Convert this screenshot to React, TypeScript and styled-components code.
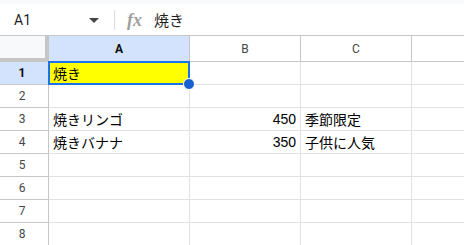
import styled, { createGlobalStyle } from "styled-components";

const GlobalStyle = createGlobalStyle`
  html, body {
    margin: 0;
    padding: 0;
    background: #ffffff;
    overflow: hidden;
  }
  body {
    font-family: Roboto, "Noto Sans CJK JP", "Liberation Sans", sans-serif;
    color: #1f1f1f;
  }
`;

const FONT = `Roboto, "Noto Sans CJK JP", "Liberation Sans", sans-serif`;
const CELL_FONT = `"Liberation Sans", Arial, "Noto Sans CJK JP", sans-serif`;

// column widths include the right grid line
const COLS = [49, 141, 111, 111, 60];

type Row = { a?: string; b?: string; c?: string };

const rows: Row[] = [
  { a: "焼き" },
  {},
  { a: "焼きリンゴ", b: "450", c: "季節限定" },
  { a: "焼きバナナ", b: "350", c: "子供に人気" },
  {},
  {},
  {},
  {},
];

const App = () => {
  return (
    <Page>
      <GlobalStyle />
      <TopStrip />
      <FormulaBar>
        <NameBox>
          <span>A1</span>
          <Caret />
        </NameBox>
        <Divider />
        <FxIcon>
          <svg width="24" height="18" viewBox="0 0 24 18" overflow="visible">
            <text
              x="1"
              y="15"
              fontFamily="'Liberation Serif', serif"
              fontStyle="italic"
              fontWeight="bold"
              fontSize="18"
              fill="#9e9e9e"
            >
              fx
            </text>
          </svg>
        </FxIcon>
        <FormulaText>焼き</FormulaText>
      </FormulaBar>

      <Grid>
        <HeaderRow>
          <Corner />
          {["A", "B", "C", ""].map((label, i) => (
            <ColHeader key={i} $w={COLS[i + 1]} $active={label === "A"} $last={i === 3}>
              {label}
            </ColHeader>
          ))}
        </HeaderRow>

        {rows.map((r, i) => (
          <DataRow key={i}>
            <RowHeader $active={i === 0}>{i + 1}</RowHeader>
            <Cell $w={COLS[1]} $fill={i === 0 ? "#ffff00" : undefined}>
              {r.a}
              {i === 0 && (
                <Selection>
                  <Handle />
                </Selection>
              )}
            </Cell>
            <Cell $w={COLS[2]} $align="right">
              {r.b}
            </Cell>
            <Cell $w={COLS[3]}>{r.c}</Cell>
            <Cell $w={COLS[4]} $last />
          </DataRow>
        ))}
      </Grid>
    </Page>
  );
};

export default App;

const Page = styled.div`
  width: 464px;
  height: 245px;
  overflow: hidden;
`;

const TopStrip = styled.div`
  height: 4px;
  background: #f8f9fa;
`;

const FormulaBar = styled.div`
  height: 31px;
  display: flex;
  align-items: center;
  border-bottom: 1px solid #c4c7c5;
  font-family: ${FONT};
  font-size: 14px;
`;

const NameBox = styled.div`
  box-sizing: border-box;
  width: 102px;
  padding-left: 14px;
  padding-right: 3px;
  margin-top: 1px;
  display: flex;
  align-items: center;
  justify-content: space-between;
`;

const Caret = styled.div`
  width: 0;
  height: 0;
  border-left: 5px solid transparent;
  border-right: 5px solid transparent;
  border-top: 5px solid #444746;
`;

const Divider = styled.div`
  width: 1px;
  height: 20px;
  background: #dadce0;
  margin-left: 12px;
`;

const FxIcon = styled.div`
  margin-left: 11px;
  display: flex;
  align-items: center;
`;

const FormulaText = styled.div`
  margin-left: 4px;
  font-size: 15px;
  margin-top: -1px;
`;

const Grid = styled.div`
  display: flex;
  flex-direction: column;
`;

const HeaderRow = styled.div`
  display: flex;
  height: 26px;
`;

const Corner = styled.div`
  width: 49px;
  height: 26px;
  box-sizing: border-box;
  background: #f8f9fa;
  border-right: 4px solid #c4c7c5;
  border-bottom: 4px solid #c4c7c5;
  flex-shrink: 0;
`;

const ColHeader = styled.div<{ $w: number; $active?: boolean; $last?: boolean }>`
  width: ${(p) => p.$w}px;
  flex-shrink: 0;
  flex-grow: ${(p) => (p.$last ? 1 : 0)};
  box-sizing: border-box;
  height: 26px;
  border-right: 1px solid #c4c7c5;
  border-bottom: 1px solid #c4c7c5;
  background: ${(p) => (p.$active ? "#d3e3fd" : "#ffffff")};
  display: flex;
  align-items: center;
  justify-content: center;
  font-family: ${FONT};
  font-size: 12px;
  font-weight: ${(p) => (p.$active ? 700 : 400)};
  color: ${(p) => (p.$active ? "#0b0b0b" : "#444746")};
`;

const DataRow = styled.div`
  display: flex;
  height: 23px;
`;

const RowHeader = styled.div<{ $active?: boolean }>`
  width: 49px;
  flex-shrink: 0;
  box-sizing: border-box;
  border-right: 1px solid #c4c7c5;
  border-bottom: 1px solid #c4c7c5;
  background: ${(p) => (p.$active ? "#d3e3fd" : "#ffffff")};
  display: flex;
  align-items: center;
  justify-content: center;
  padding-right: 4px;
  font-family: ${FONT};
  font-size: 12px;
  font-weight: ${(p) => (p.$active ? 700 : 400)};
  color: ${(p) => (p.$active ? "#0b0b0b" : "#444746")};
`;

const Cell = styled.div<{ $w: number; $align?: "left" | "right"; $fill?: string; $last?: boolean }>`
  position: relative;
  width: ${(p) => p.$w}px;
  flex-shrink: 0;
  flex-grow: ${(p) => (p.$last ? 1 : 0)};
  box-sizing: border-box;
  border-right: 1px solid #e1e1e1;
  border-bottom: 1px solid #e1e1e1;
  background: ${(p) => p.$fill ?? "#ffffff"};
  display: flex;
  align-items: center;
  justify-content: ${(p) => (p.$align === "right" ? "flex-end" : "flex-start")};
  padding: 0 4px;
  font-family: ${CELL_FONT};
  font-size: 14px;
  color: #000000;
  white-space: nowrap;
`;

const Selection = styled.div`
  position: absolute;
  z-index: 2;
  left: -1px;
  top: -1px;
  right: -1px;
  bottom: -1px;
  border: 2px solid #1a73e8;
  pointer-events: none;
`;

const Handle = styled.div`
  position: absolute;
  right: -7px;
  bottom: -7px;
  width: 10px;
  height: 10px;
  border-radius: 50%;
  background: #1a5fd0;
  border: 1px solid #ffffff;
`;
